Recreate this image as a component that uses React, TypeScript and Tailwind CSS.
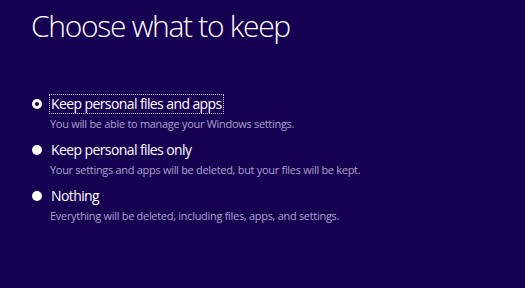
const options = [
  { label: "Keep personal files and apps", desc: "You will be able to manage your Windows settings.", checked: true },
  { label: "Keep personal files only", desc: "Your settings and apps will be deleted, but your files will be kept.", checked: false },
  { label: "Nothing", desc: "Everything will be deleted, including files, apps, and settings.", checked: false },
];

export default function App() {
  return (
    <div className="w-[525px] h-[288px] bg-[#160052] text-white font-['Segoe_UI','Open_Sans',sans-serif] overflow-hidden">
      <h1 className="pl-[31px] pt-[6px] text-[30px] font-light leading-[40px] tracking-[-1.3px]">Choose what to keep</h1>
      <div className="mt-[48px] pl-[32px] flex flex-col gap-[9px]">
        {options.map((o) => (
          <div key={o.label} className="flex flex-col">
            <div className="flex items-center h-[20px]">
              <span className="w-[10px] h-[10px] rounded-full bg-white flex items-center justify-center shrink-0">
                {o.checked && <span className="w-[4px] h-[4px] rounded-full bg-[#160052]" />}
              </span>
              <span
                className={
                  "ml-[7px] px-[1px] text-[14px] leading-[18px] tracking-[-0.6px] " +
                  (o.checked ? "border border-dotted border-[#c8c0e0]" : "border border-transparent")
                }
              >
                {o.label}
              </span>
            </div>
            <div className="pl-[18px] mt-[3px] text-[11px] leading-[14px] tracking-[-0.3px] text-[#aaa3cc]">{o.desc}</div>
          </div>
        ))}
      </div>
    </div>
  );
}
